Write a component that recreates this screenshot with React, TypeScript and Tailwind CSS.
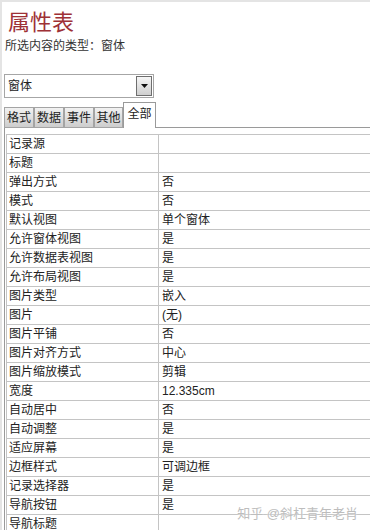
import React from "react";

const rows: [string, string][] = [
  ["记录源", ""],
  ["标题", ""],
  ["弹出方式", "否"],
  ["模式", "否"],
  ["默认视图", "单个窗体"],
  ["允许窗体视图", "是"],
  ["允许数据表视图", "是"],
  ["允许布局视图", "是"],
  ["图片类型", "嵌入"],
  ["图片", "(无)"],
  ["图片平铺", "否"],
  ["图片对齐方式", "中心"],
  ["图片缩放模式", "剪辑"],
  ["宽度", "12.335cm"],
  ["自动居中", "否"],
  ["自动调整", "是"],
  ["适应屏幕", "是"],
  ["边框样式", "可调边框"],
  ["记录选择器", "是"],
  ["导航按钮", "是"],
  ["导航标题", ""],
];

const tabs = [
  { name: "格式", w: "w-[30px]" },
  { name: "数据", w: "w-[30px]" },
  { name: "事件", w: "w-[30px]" },
  { name: "其他", w: "w-[29px]" },
];

export default function App() {
  return (
    <div className="relative w-[370px] h-[530px] overflow-hidden bg-white border-t-2 border-l-2 border-[#e4e4e4] text-[#222] font-['Liberation_Sans','Noto_Sans_CJK_SC',sans-serif]">
      {/* 标题 */}
      <div className="pl-[6px] pt-[8px] text-[22px] leading-[26px] text-[#9e3136]">属性表</div>
      <div className="pl-[3px] mt-[3px] text-[12px] leading-[14px] text-[#333]">所选内容的类型：窗体</div>

      {/* 下拉框 */}
      <div className="ml-[2px] mt-[21px] w-[150px] h-[24px] border border-[#a6a6a6] flex items-center justify-between pl-[3px] pr-[1px]">
        <span className="text-[12px] leading-[14px]">窗体</span>
        <div className="w-[16px] h-[20px] border border-[#6e6e6e] bg-gradient-to-b from-[#f6f6f6] to-[#cfcfcf] flex items-center justify-center">
          <svg width="7" height="4" viewBox="0 0 7 4">
            <path d="M0 0 L7 0 L3.5 4 Z" fill="#111" />
          </svg>
        </div>
      </div>

      {/* 选项卡 */}
      <div className="flex items-end h-[26px] mt-[4px] ml-[2px]">
        {tabs.map((t) => (
          <div
            key={t.name}
            className={`${t.w} h-[21px] border border-[#a4a4a4] bg-gradient-to-b from-[#f2f2f2] to-[#cdcdcd] flex items-center justify-center text-[12px] leading-[14px]`}
          >
            {t.name}
          </div>
        ))}
        <div className="w-[33px] h-[26px] border border-b-0 border-[#9a9a9a] bg-white flex justify-center pt-[4px] text-[12px] leading-[14px]">
          全部
        </div>
        <div className="flex-1 border-b border-[#9a9a9a]" />
      </div>

      {/* 属性列表 */}
      <div className="ml-[2px] border-l border-[#9a9a9a] pt-[6px] pl-[1px]">
        <div className="border-t border-l border-[#c4c4c4]">
          {rows.map(([label, value]) => (
            <div key={label} className="flex h-[19px] border-b border-[#c4c4c4] text-[12px] leading-[18px]">
              <div className="w-[152px] shrink-0 border-r border-[#c4c4c4] pl-[2px]">{label}</div>
              <div className="flex-1 pl-[3px]">{value}</div>
            </div>
          ))}
        </div>
      </div>

      {/* 水印 */}
      <div className="absolute right-[12px] bottom-[8px] text-[13px] leading-[16px] text-[#bdbdbd] [text-shadow:0_0_2px_#fff]">
        知乎 @斜杠青年老肖
      </div>
    </div>
  );
}
